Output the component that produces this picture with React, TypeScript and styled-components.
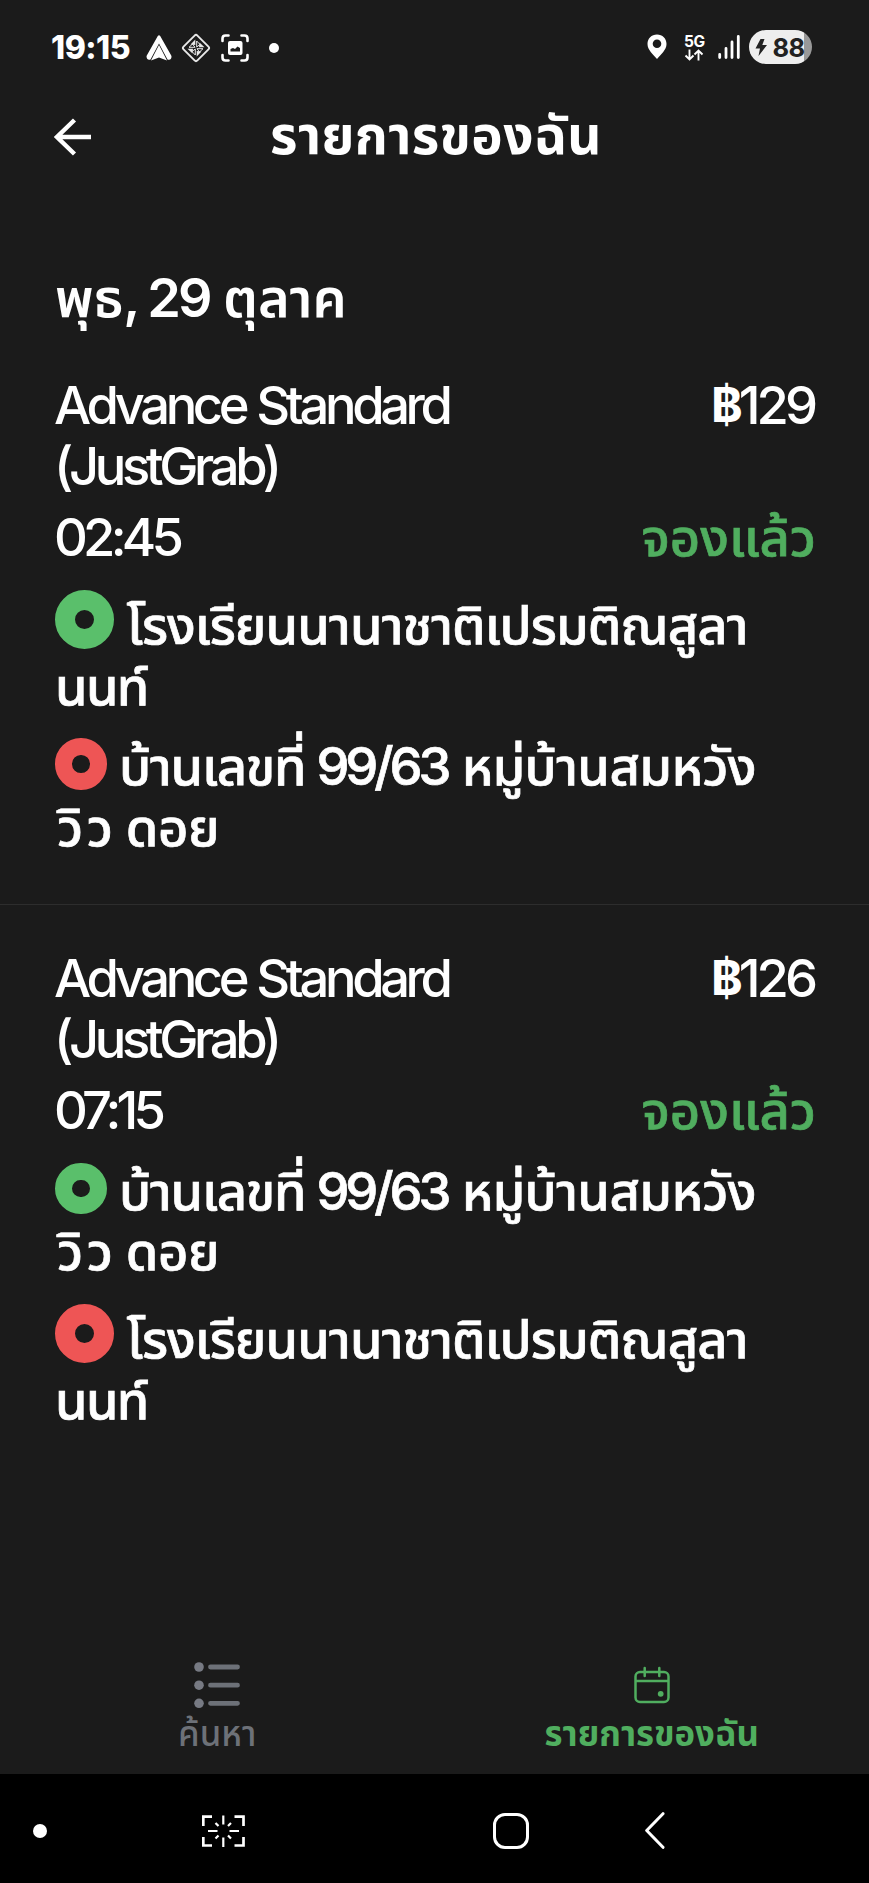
import React from 'react';
import styled, { createGlobalStyle } from 'styled-components';

type Tone = 'pickup' | 'dropoff';

interface Run {
  text: string;
  spacing: number;
  indent?: number;
}

interface Place {
  size: number;
  gap: number;
  lines: Run[][];
}

interface Booking {
  id: number;
  service: string[];
  price: string;
  time: string;
  status: string;
  stops: { tone: Tone; place: Place }[];
}

const tones: Record<Tone, string> = {
  pickup: '#5abf6b',
  dropoff: '#ee5555',
};

const school: Place = {
  size: 59,
  gap: 12.5,
  lines: [
    [{ text: 'โรงเรียนนานาชาติเปรมติณสูลา', spacing: -0.94 }],
    [{ text: 'นนท์', spacing: -1.8 }],
  ],
};

const home: Place = {
  size: 51.5,
  gap: 12.5,
  lines: [
    [
      { text: 'บ้านเลขที่', spacing: -1.2 },
      { text: '99/63', spacing: -4.1, indent: 11 },
      { text: 'หมู่บ้านสมหวัง', spacing: -0.6, indent: 14.3 },
    ],
    [
      { text: 'วิว', spacing: 3.5, indent: 2 },
      { text: 'ดอย', spacing: -0.4, indent: 9.5 },
    ],
  ],
};

const bookings: Booking[] = [
  {
    id: 1,
    service: ['Advance Standard', '(JustGrab)'],
    price: '129',
    time: '02:45',
    status: 'จองแล้ว',
    stops: [
      { tone: 'pickup', place: school },
      { tone: 'dropoff', place: home },
    ],
  },
  {
    id: 2,
    service: ['Advance Standard', '(JustGrab)'],
    price: '126',
    time: '07:15',
    status: 'จองแล้ว',
    stops: [
      { tone: 'pickup', place: home },
      { tone: 'dropoff', place: school },
    ],
  },
];

const App: React.FC = () => {
  return (
    <>
      <GlobalStyle />
      <Screen>
        <StatusBar>
          <Clock>19:15</Clock>
          <Notifications>
            <NavigationIcon />
            <DiamondIcon />
            <CaptureIcon />
            <Dot $size={10} />
          </Notifications>
          <StatusRight>
            <PinIcon />
            <Network>
              <span>5G</span>
              <ArrowsIcon />
            </Network>
            <SignalIcon />
            <Battery>
              <BoltIcon />
              88
            </Battery>
          </StatusRight>
        </StatusBar>

        <Header>
          <BackIcon />
          <Title>รายการของฉัน</Title>
        </Header>

        <Content>
          <DateHeading>
            พุธ<DateDay>, 29</DateDay> ตุลาค
          </DateHeading>
          {bookings.map(booking => (
            <BookingCard key={booking.id}>
              <Row>
                <Service>
                  {booking.service.map(line => (
                    <div key={line}>{line}</div>
                  ))}
                </Service>
                <Price>
                  <Baht>฿</Baht>
                  {booking.price}
                </Price>
              </Row>
              <TimeRow>
                <Time>{booking.time}</Time>
                <Status>{booking.status}</Status>
              </TimeRow>
              {booking.stops.map(({ tone, place }) => (
                <Address key={tone}>
                  {place.lines.map((line, i) => (
                    <AddressLine key={i}>
                      {i === 0 && (
                        <Marker $tone={tone} $size={place.size} $gap={place.gap} />
                      )}
                      {line.map(run => (
                        <AddressText
                          key={run.text}
                          $spacing={run.spacing}
                          $indent={run.indent}
                        >
                          {run.text}
                        </AddressText>
                      ))}
                    </AddressLine>
                  ))}
                </Address>
              ))}
            </BookingCard>
          ))}
        </Content>

        <Tabs>
          <Tab>
            <ListIcon />
            <TabLabel>ค้นหา</TabLabel>
          </Tab>
          <Tab $active>
            <CalendarIcon />
            <TabLabel $active>รายการของฉัน</TabLabel>
          </Tab>
        </Tabs>

        <SystemNav>
          <Dot $size={14} />
          <RecentsIcon />
          <HomeButton />
          <ChevronIcon />
        </SystemNav>
      </Screen>
    </>
  );
};

export default App;

/*************************************************
 *                    Icons                      *
 *************************************************/
const NavigationIcon = () => (
  <IconSvg width="26" height="27" viewBox="146 34 26 27">
    <path d="M157.800 36 Q159 34.500 160.200 36 L171.500 56 Q171.800 60.500 167.500 59.500 L159 43.500 L150.500 59.500 Q146.500 60.500 146.500 56 Z" fill="#fff" />
    <path d="M159 45 L167 60.500 L159 57.500 L151 60.500 Z" fill="#fff" />
  </IconSvg>
);

const DiamondIcon = () => (
  <IconSvg width="30" height="30" viewBox="0 0 30 30" fill="#e8e8e8">
    <rect x="5.200" y="5.200" width="19.600" height="19.600" rx="2" transform="rotate(45 15 15)" fill="none" stroke="#e8e8e8" strokeWidth="1.900" />
    <path d="M14.300 6.500 V12 L9.500 11.500 Z M23.500 14.300 H18 L18.500 9.500 Z M15.700 23.500 V18 L20.500 18.500 Z M6.500 15.700 H12 L11.500 20.500 Z" />
    <path d="M15.700 8 L19 11.500 L15.700 14 Z M22 15.700 L18.500 19 L16 15.700 Z M14.300 22 L11 18.500 L14.300 16 Z M8 14.300 L11.500 11 L14 14.300 Z" fill="none" stroke="#e8e8e8" strokeWidth="1" />
  </IconSvg>
);

const CaptureIcon = () => (
  <IconSvg width="30" height="30" viewBox="219.500 33 30 30">
    <path d="M228 35.500 H225 Q222 35.500 222 38.500 V41 M241 35.500 H244 Q247 35.500 247 38.500 V41 M228 60.500 H225 Q222 60.500 222 57.500 V55 M241 60.500 H244 Q247 60.500 247 57.500 V55" fill="none" stroke="#fff" strokeWidth="2.600" strokeLinecap="round" />
    <rect x="227.500" y="41" width="14.500" height="14" rx="2" fill="#fff" />
    <path d="M230 51.500 V49 L232.500 48 L234.500 49 L237 46.500 L239.500 48 V51.500 Z" fill="#1b1b1b" />
  </IconSvg>
);

const PinIcon = () => (
  <IconSvg width="20" height="26" viewBox="0 0 20 26">
    <path d="M10 0.500 C4.500 0.500 0.500 4.500 0.500 10 C0.500 16 6 20 10 25 C14 20 19.500 16 19.500 10 C19.500 4.500 15.500 0.500 10 0.500 Z M10 5.500 a4.300 4.300 0 1 1 0 8.600 a4.300 4.300 0 1 1 0 -8.600 Z" fill="#fff" fillRule="evenodd" />
  </IconSvg>
);

const ArrowsIcon = () => (
  <IconSvg width="20" height="12" viewBox="0 0 20 12">
    <path d="M5.500 0.500 V10.500 M1.500 6.500 L5.500 10.500 L9.500 6.500 M14.500 11.500 V1.500 M10.500 5.500 L14.500 1.500 L18.500 5.500" fill="none" stroke="#fff" strokeWidth="1.900" />
  </IconSvg>
);

const SignalIcon = () => (
  <IconSvg width="22" height="24" viewBox="0 0 22 24">
    <path d="M1.700 19.500 V22.500 M8 13.500 V22.500 M14 7 V22.500 M20.300 1.500 V22.500" stroke="#fff" strokeWidth="2.800" strokeLinecap="round" />
  </IconSvg>
);

const BoltIcon = () => (
  <IconSvg width="12" height="17" viewBox="0 0 12 17">
    <path d="M5.500 0 H9.500 L7.300 6 H12 L3.500 17 L5 9.500 H0.500 Z" fill="#222" />
  </IconSvg>
);

const BackIcon = () => (
  <IconSvg width="38" height="38" viewBox="0 0 38 38">
    <path d="M37 19 H3 M20.500 2 L3 19 L20.500 36" fill="none" stroke="#fff" strokeWidth="4.400" />
  </IconSvg>
);

const ListIcon = () => (
  <IconSvg width="46" height="47" viewBox="0 0 46 47">
    <g fill="#777a83">
      <circle cx="5" cy="5" r="4.800" />
      <circle cx="5" cy="23.200" r="4.800" />
      <circle cx="5" cy="41.300" r="4.800" />
    </g>
    <path d="M16.500 5 H43.500 M16.500 23.200 H43.500 M16.500 41.300 H43.500" stroke="#6d7178" strokeWidth="4.800" strokeLinecap="round" />
  </IconSvg>
);

const CalendarIcon = () => (
  <IconSvg width="36" height="38" viewBox="0 0 36 38">
    <g fill="none" stroke="#50ae5f" strokeWidth="2.500">
      <rect x="1.500" y="6" width="33" height="30" rx="4.500" />
      <path d="M1.500 15 H34.500" />
      <path d="M10.700 2 V10 M25.300 2 V10" strokeLinecap="round" />
    </g>
    <circle cx="26.700" cy="27.800" r="2.900" fill="#50ae5f" />
  </IconSvg>
);

const RecentsIcon = () => (
  <IconSvg width="43" height="32" viewBox="202 1815 43 32">
    <g fill="none" stroke="#fff" strokeWidth="2.700">
      <path d="M212 1816.700 H203.300 V1826 M234.500 1816.700 H243.500 V1826 M203.300 1837 V1845.500 H212 M243.500 1837 V1845.500 H234.500" />
      <path d="M223.300 1815.500 V1824.500 M223.300 1837.500 V1847 M208 1831 H217.500 M229.500 1831 H239" strokeWidth="2.200" />
      <path d="M215.500 1823 L218.500 1826 M231 1823 L228 1826 M215.500 1838.500 L218.500 1835.500 M231 1838.500 L228 1835.500" strokeWidth="2.200" />
    </g>
  </IconSvg>
);

const ChevronIcon = () => (
  <IconSvg width="20" height="37" viewBox="0 0 20 37">
    <path d="M18 1.700 L1.700 18.500 L18 35.300" fill="none" stroke="#fff" strokeWidth="3" strokeLinecap="round" strokeLinejoin="round" />
  </IconSvg>
);

/*************************************************
 *                    Styles                     *
 *************************************************/
const GlobalStyle = createGlobalStyle`
  body {
    margin: 0;
    background: #1b1b1b;
  }
`;

const IconSvg = styled.svg`
  display: block;
  flex: none;
`;

const Dot = styled.span<{ $size: number }>`
  flex: none;
  width: ${({ $size }) => $size}px;
  height: ${({ $size }) => $size}px;
  border-radius: 50%;
  background: #fff;
`;

const Screen = styled.div`
  display: flex;
  flex-direction: column;
  width: 869px;
  height: 1883px;
  overflow: hidden;
  background: #1b1b1b;
  color: #fff;
  font-family: Inter, 'Noto Sans Thai', 'Noto Sans', sans-serif;
  white-space: nowrap;
`;

const StatusBar = styled.div`
  display: flex;
  align-items: center;
  height: 94px;
  padding: 0 58px 0 51px;
  box-sizing: border-box;
`;

const Clock = styled.div`
  width: 95px;
  font-size: 32px;
  font-weight: 800;
  letter-spacing: -0.5px;
`;

const Notifications = styled.div`
  display: flex;
  align-items: center;
  gap: 9px;
  padding-top: 1px;

  ${Dot} {
    margin-left: 10px;
  }
`;

const StatusRight = styled.div`
  display: flex;
  align-items: center;
  margin-left: auto;
`;

const Network = styled.div`
  width: 20px;
  margin: 0 14px 0 17px;
  font-size: 15.500px;
  font-weight: 700;
  line-height: 15px;
  letter-spacing: -0.5px;
`;

const Battery = styled.div`
  display: flex;
  align-items: center;
  gap: 5.500px;
  width: 63px;
  height: 34px;
  margin: 0 -1px 0 9px;
  padding-left: 6px;
  box-sizing: border-box;
  border-radius: 17px;
  background: linear-gradient(90deg, #eee 55px, #999 55px);
  color: #222;
  font-size: 25.500px;
  font-weight: 700;
  letter-spacing: -0.5px;
`;

const Header = styled.header`
  display: flex;
  align-items: center;
  height: 86px;
  padding: 0 54px;
`;

const Title = styled.h1`
  flex: 1;
  margin: 0 35px 0 0;
  padding-bottom: 4px;
  font-size: 53px;
  font-weight: 700;
  line-height: 80px;
  letter-spacing: 0.4px;
  text-align: center;
`;

const Content = styled.main`
  flex: 1;
  padding-top: 82px;
`;

const DateHeading = styled.h2`
  height: 72px;
  margin: 0 55px 37px;
  font-size: 54px;
  font-weight: 600;
  line-height: 72px;
  letter-spacing: -0.1px;
`;

const DateDay = styled.span`
  letter-spacing: -2.900px;
`;

const BookingCard = styled.section`
  padding: 4px 55px 47px;
  font-size: 52.500px;
  font-weight: 500;
  line-height: 60.500px;

  & + & {
    padding-top: 43px;
    border-top: 1px solid #2d2d2d;
  }
`;

const Row = styled.div`
  display: flex;
  justify-content: space-between;
  letter-spacing: -4px;
`;

const Service = styled.div`
  margin-left: -1px;
  letter-spacing: -4.400px;
  word-spacing: 1.500px;
`;

const Price = styled.div`
  display: flex;
`;

const Baht = styled.span`
  font-size: 48px;
  font-weight: 700;
`;

const TimeRow = styled(Row)`
  margin-top: 11px;
`;

const Time = styled.div`
  margin-left: -1px;
  letter-spacing: -4.800px;
`;

const Status = styled.div`
  margin-right: -2px;
  color: #50ae5f;
  letter-spacing: 0;
  -webkit-text-stroke: 0.7px currentColor;
`;

const Address = styled.div`
  margin-top: 20px;
`;

const AddressLine = styled.div`
  display: flex;
  align-items: flex-end;
`;

const AddressText = styled.span<{ $spacing: number; $indent?: number }>`
  margin-left: ${({ $indent = 0 }) => $indent}px;
  letter-spacing: ${({ $spacing }) => $spacing}px;
  -webkit-text-stroke: 0.7px currentColor;
`;

const Marker = styled.span<{ $tone: Tone; $size: number; $gap: number }>`
  flex: none;
  width: ${({ $size }) => $size}px;
  height: ${({ $size }) => $size}px;
  margin: 2px ${({ $gap }) => $gap}px 7px 0;
  border: ${({ $size }) => $size * 0.345}px solid ${({ $tone }) => tones[$tone]};
  border-radius: 50%;
  box-sizing: border-box;
`;

const Tabs = styled.nav`
  display: grid;
  grid-template-columns: 1fr 1fr;
  height: 112px;
`;

const Tab = styled.div<{ $active?: boolean }>`
  display: flex;
  flex-direction: column;
  align-items: center;
  padding-top: ${({ $active }) => ($active ? 4 : 0)}px;
`;

const TabLabel = styled.div<{ $active?: boolean }>`
  margin-top: ${({ $active }) => ($active ? 6 : 1)}px;
  color: ${({ $active }) => ($active ? '#50ae5f' : '#6d7178')};
  font-size: 34.700px;
  font-weight: ${({ $active }) => ($active ? 700 : 500)};
  line-height: 46px;
`;

const SystemNav = styled.nav`
  display: flex;
  align-items: center;
  height: 109px;
  padding: 4px 33px 0;
  box-sizing: border-box;
  background: #000;

  ${IconSvg}:first-of-type {
    margin: 0 248px 0 155px;
  }
`;

const HomeButton = styled.span`
  width: 36px;
  height: 36px;
  margin-right: 116px;
  border: 3.500px solid #fff;
  border-radius: 12px;
  box-sizing: border-box;
`;
